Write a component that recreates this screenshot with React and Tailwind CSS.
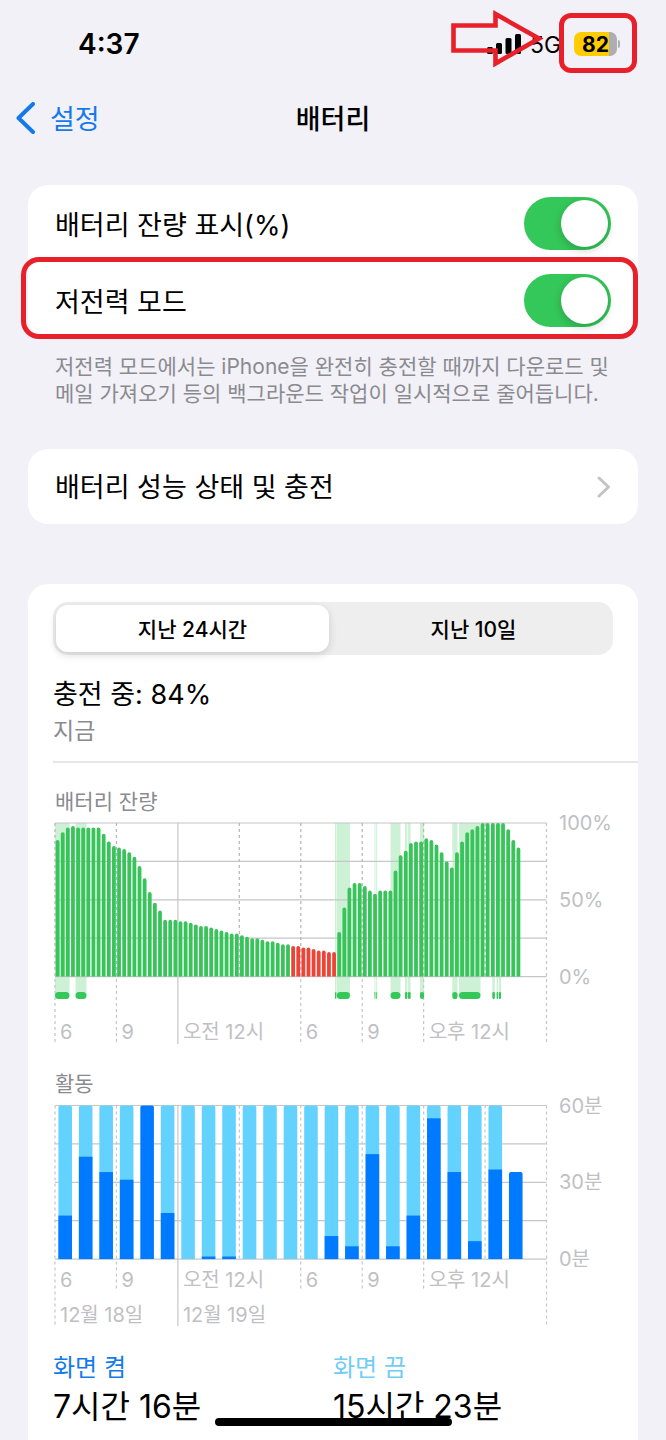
import { useState } from 'react';

const HOUR = 61.44;
const PLOT_LEFT = 2;
const PLOT_RIGHT = PLOT_LEFT + HOUR * 8;
const PLOT_HEIGHT = 153.6;

// one reading every 15 minutes
const levels = [
  89, 94, 97, 98, 97, 97, 97, 97, 97, 93, 88, 85, 84, 83, 81, 78, 72, 64, 55, 48, 43, 37, 37, 37,
  36, 36, 35, 34, 33, 33, 32, 31, 30, 29, 28, 28, 27, 26, 25, 25, 24, 23, 23, 22, 21, 21, 20, 20,
  19, 19, 18, 17, 17, 16, 16, 29, 45, 58, 61, 61, 59, 56, 54, 56, 56, 56, 69, 79, 82, 87, 88, 88,
  90, 89, 86, 81, 75, 71, 81, 88, 94, 96, 98, 100, 100, 100, 100, 100, 96, 89, 84,
];

// [start, width] of each charging period
const charging = [
  [2, 14.5], [22.5, 11], [282, 1.4], [283.8, 13.2], [321.5, 0.9], [323.2, 0.9], [337.5, 10], [352, 2.4],
  [355, 2.6], [367, 4], [399.3, 5.2], [406, 21.5], [439.3, 2.6], [443.6, 1.5], [445.8, 2.2],
];

// minutes per hour with the screen on / off
const activity = [
  [17, 43], [40, 20], [34, 26], [31, 29], [60, 0], [18, 42], [0, 60], [1, 59], [1, 59], [0, 60], [0, 60], [0, 60],
  [0, 60], [9, 51], [5, 55], [41, 19], [5, 55], [17, 43], [55, 5], [34, 26], [7, 53], [35, 25], [34, 0],
];

const timeLabels = [[0, '6'], [1, '9'], [2, '오전 12시'], [4, '6'], [5, '9'], [6, '오후 12시']];

function Switch({ id, checked, onChange }) {
  return (
    <input
      id={id}
      type="checkbox"
      role="switch"
      checked={checked}
      onChange={(e) => onChange(e.target.checked)}
      className="relative h-[53px] w-[87px] shrink-0 appearance-none rounded-full bg-[#e9e9ea] p-[3px] before:block before:size-[47px] before:rounded-full before:bg-white before:shadow-[0_3px_8px_rgba(0,0,0,0.2)] checked:bg-[#34c759] checked:before:ml-auto"
    />
  );
}

function Grid({ top, ends }) {
  const bottom = top + PLOT_HEIGHT;
  return (
    <g stroke="#c6c6ca" strokeWidth="1.2" fill="none">
      {[0, 1, 2, 3, 4].map((i) => (
        <line key={i} x1={PLOT_LEFT} x2={PLOT_RIGHT} y1={top + (PLOT_HEIGHT / 4) * i} y2={top + (PLOT_HEIGHT / 4) * i} />
      ))}
      {ends.map((end, i) => (
        <line
          key={i}
          x1={PLOT_LEFT + HOUR * i}
          x2={PLOT_LEFT + HOUR * i}
          y1={top}
          y2={end || bottom}
          strokeDasharray={i === 2 ? undefined : '3 3'}
        />
      ))}
    </g>
  );
}

function ScaleLabels({ top, labels }) {
  return labels.map((label, i) => (
    <text key={label} x="506" y={top + (PLOT_HEIGHT / 2) * i + 7}>{label}</text>
  ));
}

function TimeLabels({ y }) {
  return timeLabels.map(([col, label]) => (
    <text key={col} x={PLOT_LEFT + HOUR * col + 5} y={y}>{label}</text>
  ));
}

function BatteryChart() {
  const top = 9;
  const bottom = top + PLOT_HEIGHT;
  return (
    <svg viewBox="0 0 560 230" className="block w-full overflow-visible" role="img" aria-label="배터리 잔량">
      <g fill="#34c759" fillOpacity="0.25">
        {charging.map(([x, w]) => <rect key={x} x={x} y={top} width={w} height="172" />)}
      </g>
      <Grid top={top} ends={[228, 228, 230, 0, 228, 228, 228, 0, 228]} />
      {levels.map((level, i) => {
        const x = PLOT_LEFT + 0.7 + i * 5.12;
        const h = level * 1.536;
        return (
          <path
            key={i}
            d={`M${x} ${bottom}v${1.9 - h}a1.9 1.9 0 0 1 3.8 0v${h - 1.9}z`}
            fill={level <= 20 ? '#ee4438' : '#38c45a'}
          />
        );
      })}
      <g stroke="#8e8e93" strokeOpacity="0.3" strokeWidth="1">
        {[0, 1, 3, 4, 5, 6, 7].map((i) => (
          <line key={i} x1={PLOT_LEFT + HOUR * i} x2={PLOT_LEFT + HOUR * i} y1={top} y2={bottom} strokeDasharray="3 3" />
        ))}
      </g>
      <g fill="#34c759">
        {charging.map(([x, w]) => <rect key={x} x={x} y="178" width={w} height="7" rx={Math.min(3.5, w / 2)} />)}
      </g>
      <g fill="#c0c0c4" fontSize="20">
        <ScaleLabels top={top} labels={['100%', '50%', '0%']} />
        <TimeLabels y={225} />
      </g>
    </svg>
  );
}

function ActivityChart() {
  const top = 9.5;
  const bottom = top + PLOT_HEIGHT;
  return (
    <svg viewBox="0 0 560 230" className="block w-full overflow-visible" role="img" aria-label="활동">
      <Grid top={top} ends={[229, 194, 230, 0, 194, 194, 194, 0, 229]} />
      {activity.map(([on, off], i) => {
        const x = PLOT_LEFT + 3.4 + i * 20.48;
        const h = (on + off) * 2.56;
        return (
          <g key={i}>
            <path
              d={`M${x} ${bottom}v${2 - h}q0 -2 2 -2h9.6q2 0 2 2v${h - 2}z`}
              fill={off ? '#64d2ff' : '#007aff'}
            />
            {off > 0 && <rect x={x} y={bottom - on * 2.56} width="13.6" height={on * 2.56} fill="#007aff" />}
          </g>
        );
      })}
      <g fill="#c0c0c4" fontSize="20">
        <ScaleLabels top={top} labels={['60분', '30분', '0분']} />
        <TimeLabels y={191} />
        <text x="7" y="226">12월 18일</text>
        <text x={PLOT_LEFT + HOUR * 2 + 5} y="226">12월 19일</text>
      </g>
    </svg>
  );
}

function StatusBar() {
  return (
    <div className="flex h-[88px] items-center justify-between pl-[78px] pr-[46px]">
      <span className="text-[28px] font-semibold">4:37</span>
      <div className="relative flex items-center">
        <svg width="34" height="20" viewBox="0 0 34 20" aria-hidden="true">
          <rect x="0" y="13" width="6" height="7" rx="1.5" />
          <rect x="9" y="9" width="6" height="11" rx="1.5" />
          <rect x="18.5" y="4" width="6" height="16" rx="1.5" />
          <rect x="28" y="0" width="6" height="20" rx="1.5" />
        </svg>
        <span className="ml-[9px] w-[32px] pt-0.5 text-[23px] leading-6">5G</span>
        <div className="ml-3 flex items-center gap-px">
          <div className="flex h-6 w-[43px] items-center justify-center rounded-[7px] bg-linear-to-r from-[#ffcc00] from-82% to-[#aeaeb2] to-82% pt-0.5 text-[21px] font-bold">
            82
          </div>
          <div className="h-2 w-[2px] rounded-r-full bg-[#aeaeb2]" />
        </div>
        {/* highlight marks */}
        <svg className="absolute -left-[37px] -top-[23px]" width="95" height="60" viewBox="0 0 95 60" aria-hidden="true">
          <path d="M3.5 17.5H45.5V6L89 30.5L45.5 55.5V42.5H3.5Z" fill="none" stroke="#e8202a" strokeWidth="4.6" />
        </svg>
        <div className="absolute -right-[17px] -top-[18px] h-[60px] w-[78px] rounded-xl border-[5px] border-[#e8202a]" />
      </div>
    </div>
  );
}

export default function App() {
  const [showPercent, setShowPercent] = useState(true);
  const [lowPower, setLowPower] = useState(true);
  const [range, setRange] = useState('day');

  const tab = 'h-[47px] flex-1 rounded-xl pt-0.5 text-[21px] font-medium';
  const activeTab = 'bg-white shadow-[0_3px_8px_rgba(0,0,0,0.14)]';

  return (
    <div className="flex min-h-screen flex-col bg-[#f2f1f8] font-[Inter,'Noto_Sans_CJK_KR',sans-serif] text-black">
      <StatusBar />
      <header className="grid h-[60px] grid-cols-[1fr_auto_1fr] items-center px-4">
        <a href="#settings" className="flex items-center gap-[15px] text-[27px] text-[#147aeb]">
          <svg width="19" height="32" viewBox="0 0 19 32" fill="none" stroke="currentColor" strokeWidth="4" strokeLinecap="round" strokeLinejoin="round" aria-hidden="true">
            <path d="M17 2L2.5 16L17 30" />
          </svg>
          <span className="pt-1">설정</span>
        </a>
        <h1 className="pt-1 text-[27px] font-medium">배터리</h1>
      </header>

      <main className="flex flex-1 flex-col px-7 pt-[37px]">
        <section className="rounded-[20px] bg-white text-[27px]">
          <div className="flex h-[77px] items-center justify-between px-[27px]">
            <label htmlFor="percent" className="pt-1.5">배터리 잔량 표시(%)</label>
            <Switch id="percent" checked={showPercent} onChange={setShowPercent} />
          </div>
          <div className="relative flex h-[76px] items-center justify-between px-[27px]">
            <label htmlFor="low-power" className="pt-1.5">저전력 모드</label>
            <Switch id="low-power" checked={lowPower} onChange={setLowPower} />
            <div className="pointer-events-none absolute -bottom-px -left-[7px] -top-[5px] right-0 rounded-[18px] border-[5px] border-[#e8202a]" />
          </div>
        </section>
        <p className="break-keep pl-[27px] pr-6 pt-[15px] text-[21px] leading-[27px] text-[#8a8a8f]">
          저전력 모드에서는 iPhone을 완전히 충전할 때까지 다운로드 및 메일 가져오기 등의 백그라운드 작업이 일시적으로 줄어듭니다.
        </p>

        <a href="#health" className="mt-[42px] flex h-[75px] items-center justify-between rounded-[20px] bg-white px-[27px] text-[27px]">
          <span className="pt-1">배터리 성능 상태 및 충전</span>
          <svg width="14" height="22" viewBox="0 0 14 22" fill="none" stroke="#c4c4c7" strokeWidth="3" strokeLinecap="round" strokeLinejoin="round" aria-hidden="true">
            <path d="M2 2L11.5 11L2 20" />
          </svg>
        </a>

        <section className="mt-[60px] flex-1 rounded-t-[20px] bg-white px-[25px] pt-[18px]">
          <div className="flex gap-2 rounded-[15px] bg-[#eeeeef] p-[3px]">
            <button type="button" onClick={() => setRange('day')} className={`${tab} ${range === 'day' ? activeTab : ''}`}>
              지난 24시간
            </button>
            <button type="button" onClick={() => setRange('days')} className={`${tab} ${range === 'days' ? activeTab : ''}`}>
              지난 10일
            </button>
          </div>
          <div className="-mr-[25px] border-b-2 border-[#e6e6e8] pb-3 pt-[22px]">
            <p className="text-[27px] leading-9">충전 중: 84%</p>
            <p className="text-[23px] leading-9 text-[#8a8a8f]">지금</p>
          </div>

          <h2 className="mt-[27px] pl-0.5 text-[21px] leading-6 text-[#8a8a8f]">배터리 잔량</h2>
          <BatteryChart />
          <h2 className="mt-7 pl-0.5 text-[21px] leading-6 text-[#8a8a8f]">활동</h2>
          <ActivityChart />

          <dl className="mt-7 grid grid-cols-2">
            <div>
              <dt className="text-[24px] leading-7 text-[#147aeb]">화면 켬</dt>
              <dd className="text-[32px] leading-[50px]">7시간 16분</dd>
            </div>
            <div>
              <dt className="text-[24px] leading-7 text-[#72cdf4]">화면 끔</dt>
              <dd className="text-[32px] leading-[50px]">15시간 23분</dd>
            </div>
          </dl>
        </section>
      </main>

      <div className="fixed inset-x-0 bottom-[14px] mx-auto h-2 w-[237px] rounded-full bg-black" />
    </div>
  );
}
